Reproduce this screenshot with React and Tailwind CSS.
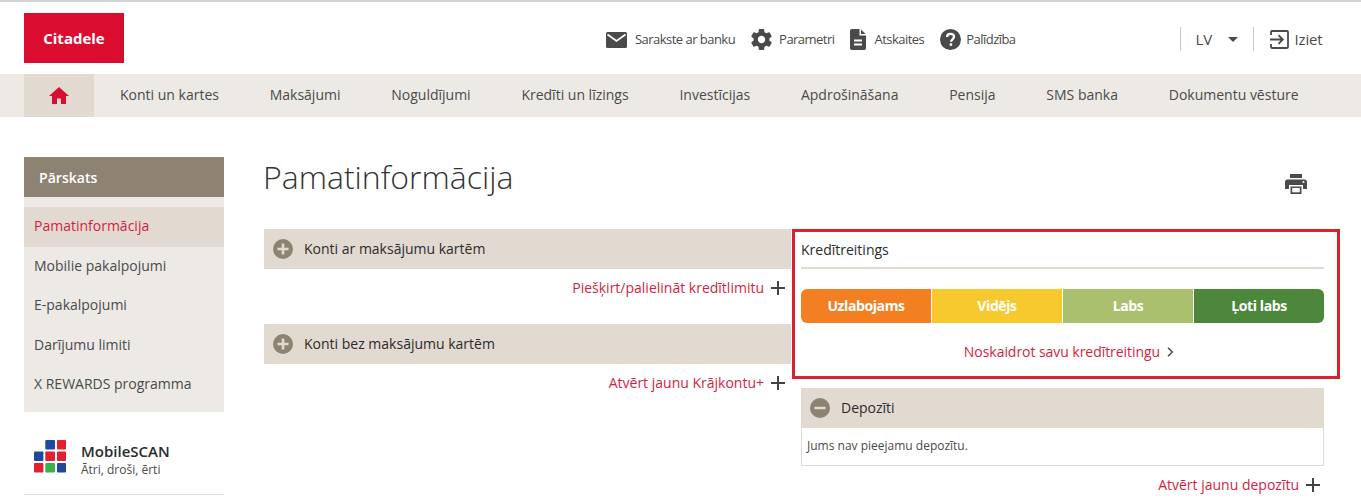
const F = { fontFamily: '"Open Sans", "Noto Sans", sans-serif' };

const navItems = ["Konti un kartes", "Maksājumi", "Noguldījumi", "Kredīti un līzings", "Investīcijas", "Apdrošināšana", "Pensija", "SMS banka", "Dokumentu vēsture"];
const sideItems = ["Mobilie pakalpojumi", "E-pakalpojumi", "Darījumu limiti", "X REWARDS programma"];
const ratings = [
  ["Uzlabojams", "bg-[#f28023]"],
  ["Vidējs", "bg-[#f8c82f]"],
  ["Labs", "bg-[#abc06f]"],
  ["Ļoti labs", "bg-[#4c873c]"],
];

function TopLink({ icon, label, className = "" }) {
  return (
    <div className={"flex items-center " + className}>
      {icon}
      <span className="text-[13px] pt-[1px] text-[#4a4a4a] tracking-[-0.53px] whitespace-nowrap">{label}</span>
    </div>
  );
}

function Envelope() {
  return (
    <svg width="21" height="16" viewBox="0 0 21 16" className="mr-[8px]">
      <rect width="21" height="16" rx="1.5" fill="#4a4a4a" />
      <path d="M1.5 2.5 10.5 9 19.5 2.5" fill="none" stroke="#fff" strokeWidth="1.8" />
    </svg>
  );
}

function Gear() {
  return (
    <svg width="21" height="21" viewBox="2.2 2 19.6 20" className="mr-[7px]" fill="#4a4a4a">
      <path d="M19.43 12.98c.04-.32.07-.64.07-.98s-.03-.66-.07-.98l2.11-1.65c.19-.15.24-.42.12-.64l-2-3.46c-.12-.22-.39-.3-.61-.22l-2.49 1c-.52-.4-1.08-.73-1.69-.98l-.38-2.65C14.46 2.18 14.25 2 14 2h-4c-.25 0-.46.18-.49.42l-.38 2.65c-.61.25-1.17.59-1.69.98l-2.49-1c-.23-.09-.49 0-.61.22l-2 3.46c-.13.22-.07.49.12.64l2.11 1.65c-.04.32-.07.65-.07.98s.03.66.07.98l-2.11 1.65c-.19.15-.24.42-.12.64l2 3.46c.12.22.39.3.61.22l2.49-1c.52.4 1.08.73 1.69.98l.38 2.65c.03.24.24.42.49.42h4c.25 0 .46-.18.49-.42l.38-2.65c.61-.25 1.17-.59 1.69-.98l2.49 1c.23.09.49 0 .61-.22l2-3.46c.12-.22.07-.49-.12-.64l-2.11-1.65zM12 15.5c-1.93 0-3.5-1.57-3.5-3.5s1.57-3.5 3.5-3.5 3.5 1.57 3.5 3.5-1.57 3.5-3.5 3.5z" />
    </svg>
  );
}

function FileIcon() {
  return (
    <svg width="16" height="21" viewBox="0 0 16 21" className="mr-[8px]">
      <path d="M1.8 0H9.5V6.5H16V19.2a1.8 1.8 0 0 1-1.8 1.8H1.8A1.8 1.8 0 0 1 0 19.2V1.8A1.8 1.8 0 0 1 1.8 0Z" fill="#4a4a4a" />
      <path d="M11 0.4 15.6 5H11Z" fill="#4a4a4a" />
      <rect x="4" y="10.5" width="8" height="2" fill="#fff" />
      <rect x="4" y="14.5" width="8" height="2" fill="#fff" />
    </svg>
  );
}

function Help() {
  return (
    <svg width="21" height="21" viewBox="0 0 21 21" className="mr-[5px]">
      <circle cx="10.5" cy="10.5" r="10.5" fill="#4a4a4a" />
      <path d="M7 8c0-2 1.5-3.2 3.5-3.2S14 6 14 7.8c0 2.4-3 2.6-3 5" fill="none" stroke="#fff" strokeWidth="2.2" />
      <rect x="9.7" y="14.3" width="2.5" height="2.5" fill="#fff" />
    </svg>
  );
}

function Exit() {
  return (
    <svg width="19" height="19" viewBox="0 0 19 19" fill="none" stroke="#4a4a4a" strokeWidth="1.8" className="mr-[6px]">
      <path d="M1 5V1.9C1 1.4 1.4 1 1.9 1H17.1C17.6 1 18 1.4 18 1.9V17.1C18 17.6 17.6 18 17.1 18H1.9C1.4 18 1 17.6 1 17.1V14" />
      <path d="M0 9.5H12.5M8.5 5.2 12.8 9.5 8.5 13.8" />
    </svg>
  );
}

function Home() {
  return (
    <svg width="20" height="17" viewBox="0 0 20 17" fill="#da0d30">
      <path d="M10 0 20 9H17V17H12V11.5H8V17H3V9H0Z" />
    </svg>
  );
}

function Printer() {
  return (
    <svg width="22" height="20" viewBox="0 0 22 20" fill="#4a4a4a">
      <rect x="5" y="0" width="12" height="4" />
      <path d="M2.5 5.5H19.5A2.5 2.5 0 0 1 22 8V15H18V11H4V15H0V8A2.5 2.5 0 0 1 2.5 5.5Z" />
      <path d="M5.5 12.5H16.5V20H5.5Z" />
      <rect x="7.2" y="14" width="7.6" height="4.3" fill="#fff" />
      <circle cx="18.5" cy="8" r="1" fill="#fff" />
    </svg>
  );
}

function RoundIcon({ minus }) {
  return (
    <svg width="20" height="20" viewBox="0 0 20 20" className="shrink-0">
      <circle cx="10" cy="10" r="10" fill="#8e8372" />
      <rect x="4.5" y="8.7" width="11" height="2.6" rx="0.5" fill="#e2dad1" />
      {!minus && <rect x="8.7" y="4.5" width="2.6" height="11" rx="0.5" fill="#e2dad1" />}
    </svg>
  );
}

function Plus() {
  return (
    <svg width="14" height="14" viewBox="0 0 14 14" stroke="#3f4444" strokeWidth="2" className="shrink-0">
      <path d="M7 0V14M0 7H14" />
    </svg>
  );
}

function AddLink({ label, className = "" }) {
  return (
    <div className={"flex items-center justify-end pr-[6px] " + className}>
      <span className="text-[14px] leading-[20px] text-[#d21f3f] mr-[7px] whitespace-nowrap">{label}</span>
      <Plus />
    </div>
  );
}

function AccordionHead({ label, minus }) {
  return (
    <div className="h-[40px] bg-[#e2dad1] flex items-center pl-[9px]">
      <RoundIcon minus={minus} />
      <span className="ml-[11px] pb-[2px] text-[14px] text-[#2b2b2b] whitespace-nowrap">{label}</span>
    </div>
  );
}

export default function App() {
  return (
    <div style={F} className="w-[1361px] h-[504px] overflow-hidden bg-white border-t-2 border-[#d2d2d2]">
      <header className="h-[72px] flex items-start pl-[24px]">
        <div className="mt-[11px] w-[100px] h-[50px] bg-[#da0d30] flex items-center justify-center">
          <span className="text-white font-bold text-[15px] leading-none">Citadele</span>
        </div>
        <div className="ml-[482px] mt-[27px] h-[21px] flex items-center">
          <TopLink icon={<Envelope />} label="Sarakste ar banku" />
          <TopLink icon={<Gear />} label="Parametri" className="ml-[16px]" />
          <TopLink icon={<FileIcon />} label="Atskaites" className="ml-[16px]" />
          <TopLink icon={<Help />} label="Palīdzība" className="ml-[16px]" />
        </div>
        <div className="ml-[164px] mt-[25px] h-[24px] flex items-center text-[#4a4a4a]">
          <div className="h-[24px] border-l border-[#c9c9c9] pl-[15px] flex items-center w-[73px]">
            <span className="text-[15px] tracking-[-0.2px]">LV</span>
            <span className="ml-[16px] w-0 h-0 border-x-[5px] border-x-transparent border-t-[5px] border-t-[#4a4a4a]" />
          </div>
          <div className="h-[24px] border-l border-[#c9c9c9] pl-[16px] flex items-center">
            <Exit />
            <span className="text-[15px] tracking-[-0.2px]">Iziet</span>
          </div>
        </div>
      </header>

      <nav className="h-[43px] bg-[#edeae6] pl-[24px] flex items-center">
        <div className="w-[70px] h-full bg-[#e2dad1] flex items-center justify-center"><Home /></div>
        <div className="flex items-center ml-[26px] gap-[50.75px] pb-[2px]">
          {navItems.map((n) => (
            <span key={n} className="text-[14px] text-[#4a4a4a] whitespace-nowrap">{n}</span>
          ))}
        </div>
      </nav>

      <div className="flex pl-[24px] pt-[40px]">
        <aside className="w-[200px] shrink-0">
          <div className="h-[40px] bg-[#8e8372] flex items-center pl-[15px] text-[14px] tracking-[0.05px] text-white font-semibold">Pārskats</div>
          <div className="bg-[#edeae6] pt-[10px] pb-[7px]">
            <div className="h-[40px] bg-[#e2dad1] flex items-center pl-[10px] pb-[3px] text-[14px] text-[#d21f3f]">Pamatinformācija</div>
            {sideItems.map((s) => (
              <div key={s} className="h-[39.5px] flex items-center pl-[10px] pb-[3px] text-[14px] text-[#4a4a4a] whitespace-nowrap">{s}</div>
            ))}
          </div>
          <div className="mt-[27px] h-[56px] border-b border-[#e2e2e2] flex items-start pl-[10px] pt-[1px]">
            <svg width="32" height="33" viewBox="0 0 32 33" className="shrink-0">
              <rect x="11.3" y="0" width="9.7" height="9.6" rx="1" fill="#1f4a9c" />
              <rect x="23" y="0" width="9" height="9.6" rx="1" fill="#e3202f" />
              <rect x="0" y="11.6" width="9.4" height="9.4" rx="1" fill="#1f4a9c" />
              <rect x="11.3" y="11.6" width="9.7" height="9.4" rx="1" fill="#e3202f" />
              <rect x="23" y="11.6" width="9" height="9.4" rx="1" fill="#e3202f" />
              <rect x="0" y="23" width="9.4" height="9.6" rx="1" fill="#e3202f" />
              <rect x="11.3" y="23" width="9.7" height="9.6" rx="1" fill="#3caf4b" />
              <rect x="23" y="23" width="9" height="9.6" rx="1" fill="#1f4a9c" />
            </svg>
            <div className="ml-[15px] pt-[1px]">
              <div className="text-[15px] leading-[20px] font-semibold text-[#2b2b2b]">MobileSCAN</div>
              <div className="text-[12px] leading-[16px] mt-[1px] text-[#4a4a4a]">Ātri, droši, ērti</div>
            </div>
          </div>
        </aside>

        <main className="ml-[40px] w-[1060px] shrink-0">
          <div className="h-[72px] flex items-start justify-between pr-[17px]">
            <h1 className="text-[32px] leading-[40px] font-light text-[#333] whitespace-nowrap -ml-[1px]">Pamatinformācija</h1>
            <div className="mt-[17px]"><Printer /></div>
          </div>
          <div className="flex items-start">
            <div className="w-[527px] shrink-0">
              <AccordionHead label="Konti ar maksājumu kartēm" />
              <AddLink label="Piešķirt/palielināt kredītlimitu" className="mt-[9px]" />
              <div className="mt-[26px]"><AccordionHead label="Konti bez maksājumu kartēm" /></div>
              <AddLink label="Atvērt jaunu Krājkontu+" className="mt-[9px]" />
            </div>
            <div className="ml-[1px] w-[548px] shrink-0">
              <section className="h-[150px] border-[3px] border-[#d9202f] pl-[6px] pr-[13px]">
                <div className="h-[37px] border-b-2 border-[#e2dad1] flex items-center text-[14px] text-[#2b2b2b] pb-[1px]">Kredītreitings</div>
                <div className="mt-[20px] h-[34px] rounded-[6px] overflow-hidden flex gap-px">
                  {ratings.map(([label, bg]) => (
                    <div key={label} className={"flex-1 flex items-center justify-center pb-[1px] text-white font-bold text-[14px] tracking-[-0.4px] " + bg}>{label}</div>
                  ))}
                </div>
                <div className="mt-[18px] pl-[13px] flex items-center justify-center text-[14px] text-[#d21f3f]">
                  <span className="tracking-[-0.05px]">Noskaidrot savu kredītreitingu</span>
                  <svg width="7" height="10" viewBox="0 0 7 10" fill="none" stroke="#4a4a4a" strokeWidth="1.5" className="ml-[7px]"><path d="M1 0.8 5.3 5 1 9.2" /></svg>
                </div>
              </section>
              <div className="ml-[9px] w-[523px] mt-[9px]">
                <AccordionHead label="Depozīti" minus />
                <div className="h-[38px] border border-t-0 border-[#dcdcdc] flex items-center pl-[5px] pb-[2px] text-[12px] text-[#4a4a4a]">Jums nav pieejamu depozītu.</div>
                <AddLink label="Atvērt jaunu depozītu" className="mt-[9px] !pr-[4px]" />
              </div>
            </div>
          </div>
        </main>
      </div>
    </div>
  );
}
